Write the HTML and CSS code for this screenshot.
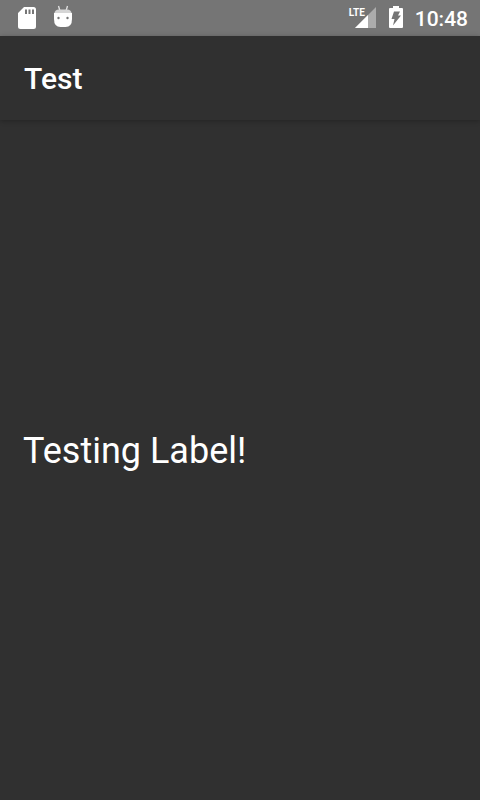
FILE: index.html
```html
<!DOCTYPE html>
<html lang="en">
<head>
<meta charset="utf-8">
<meta name="viewport" content="width=device-width, initial-scale=1">
<title>Test</title>
<link rel="stylesheet" href="styles.css">
</head>
<body>
<div class="status-bar">
  <svg class="icon" viewBox="0 0 24 36" aria-hidden="true">
    <path fill="#fff" fill-rule="evenodd" d="M10 7h9.500q2.500 0 2.500 2.500v17q0 2.500-2.500 2.500h-13Q4 29 4 26.500V13zM11 9.500v4.500h2V9.500zM14.500 9.500v4.500h2V9.500zM18 9.500v4.500h2V9.500z"/>
  </svg>
  <svg class="icon droid" viewBox="0 0 24 36" aria-hidden="true">
    <path d="M7.500 6l1.500 5M16.500 6L15 11" stroke="#e4e4e4" stroke-width="1.300"/>
    <path fill="#d6d6d6" d="M3.300 13.500Q4 9.500 8 9.500h8q4 0 4.700 4z"/>
    <path fill="#fff" d="M3 13h18v6q0 8-6.500 8h-5Q3 27 3 19z"/>
    <circle cx="7.500" cy="18" r="1.200" fill="#777"/>
    <circle cx="16.500" cy="18" r="1.200" fill="#777"/>
  </svg>
  <div class="signal">
    <svg class="signal-icon" viewBox="0 0 28 36" aria-hidden="true">
      <path fill="#acacac" d="M27 7v21H6z"/>
      <path fill="#fff" d="M19 15v13H6z"/>
    </svg>
    <span class="network">LTE</span>
  </div>
  <svg class="icon battery" viewBox="0 0 24 36" aria-hidden="true">
    <path fill="#fff" d="M9 6h6v2h3q1 0 1 1v18q0 1-1 1H6q-1 0-1-1V9q0-1 1-1h3z"/>
    <path fill="#757575" d="M10 11.500H16L14 15.500H17L9 25.500l1.500-6.500H7.500z"/>
  </svg>
  <time class="clock">10:48</time>
</div>
<header class="app-bar"><h1 class="title">Test</h1></header>
<main class="content"><p class="label">Testing Label!</p></main>
</body>
</html>
```
FILE: styles.css
```css
body {
  margin: 0;
  min-height: 100vh;
  display: flex;
  flex-direction: column;
  background: #303030;
  color: #fff;
  font-family: Roboto, sans-serif;
}

.status-bar {
  display: flex;
  align-items: center;
  height: 36px;
  padding: 0 12px 0 14px;
  background: #757575;
}

.icon {
  width: 24px;
  height: 36px;
}

.droid {
  margin-left: 13px;
}

.signal {
  position: relative;
  width: 28px;
  height: 36px;
  margin-left: auto;
}

.signal-icon {
  display: block;
  width: 28px;
  height: 36px;
}

.network {
  position: absolute;
  top: 7px;
  left: 0;
  font-size: 10px;
  font-weight: 700;
  line-height: 11px;
}

.battery {
  margin-left: 7px;
}

.clock {
  margin-left: 7px;
  font-size: 21px;
  font-weight: 500;
  line-height: 36px;
  padding-top: 2px;
}

.app-bar {
  display: flex;
  align-items: center;
  height: 82px;
  padding: 2px 24px 0;
  box-shadow: 0 1px 5px rgba(0, 0, 0, 0.28);
}

.title {
  margin: 0;
  font-size: 30px;
  font-weight: 500;
  line-height: 36px;
}

.content {
  flex: 1;
  display: flex;
  align-items: center;
  padding: 0 23px 18px;
}

.label {
  margin: 0;
  font-size: 36px;
  line-height: 42px;
}
```
